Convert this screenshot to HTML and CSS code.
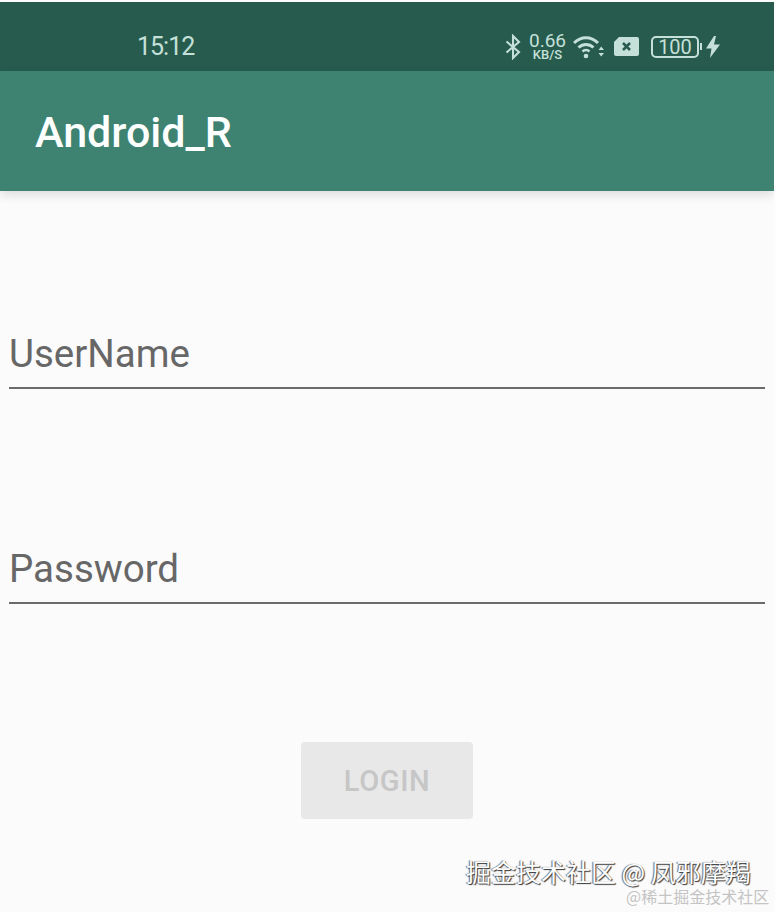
FILE: index.html
```html
<!DOCTYPE html>
<html lang="en">

<head>
    <meta charset="UTF-8">
    <meta name="viewport" content="width=device-width, initial-scale=1.0">
    <title>Android_R</title>
    <link rel="stylesheet" href="styles.css">
</head>

<body>
    <div class="screen">
        <div class="status-bar">
            <span class="clock">15:12</span>
            <div class="status-icons">
                <svg class="icon-bt" width="16" height="26" viewBox="0 0 16 26">
                    <path d="M1.5 7.5 L14 18 L8 24 V2 L14 8 L1.5 18.5" fill="none" stroke="#c5e0d8" stroke-width="2.1"/>
                </svg>
                <div class="speed">
                    <span class="speed-num">0.66</span>
                    <span class="speed-unit">KB/S</span>
                </div>
                <svg class="icon-wifi" width="31" height="26" viewBox="0 0 31 26">
                    <path d="M1 9 C8 2 18 2 25 9" fill="none" stroke="#c5e0d8" stroke-width="3"/>
                    <path d="M5.5 13.5 C10 9.5 16 9.5 20.5 13.5" fill="none" stroke="#c5e0d8" stroke-width="3"/>
                    <path d="M9.5 17.5 C11.5 15.7 14.5 15.7 16.5 17.5" fill="none" stroke="#c5e0d8" stroke-width="2.6"/>
                    <circle cx="13" cy="22" r="2.3" fill="#c5e0d8"/>
                    <path d="M25.5 16 L28.2 12.5 L31 16 Z M25.5 19 L31 19 L28.2 22.5 Z" fill="#c5e0d8"/>
                </svg>
                <svg class="icon-sim" width="27" height="21" viewBox="0 0 27 21">
                    <path d="M6 1 H24 Q26 1 26 3 V18 Q26 20 24 20 H3 Q1 20 1 18 V6 Z" fill="#c5e0d8"/>
                    <path d="M10 7 L17 14 M17 7 L10 14" stroke="#265b4e" stroke-width="2.5"/>
                </svg>
                <div class="battery">
                    <div class="battery-body">100</div>
                    <div class="battery-tip"></div>
                </div>
                <svg class="icon-bolt" width="14" height="22" viewBox="0 0 14 22">
                    <path d="M8 0 L0 12.5 H5.5 L4 22 L14 8.5 H8 L10 0 Z" fill="#c5e0d8"/>
                </svg>
            </div>
        </div>
        <div class="app-bar">Android_R</div>

        <div class="form">
            <div class="field field-user">UserName</div>
            <div class="field field-pass">Password</div>
            <div class="login-row">
                <button class="login-btn">LOGIN</button>
            </div>
        </div>

        <div class="watermark">掘金技术社区 @ 凤邪摩羯</div>
        <div class="watermark-small">@稀土掘金技术社区</div>
    </div>
</body>

</html>
```

FILE: styles.css
```css
html,
body {
    margin: 0;
    background-color: #fdfdfd;
}

.screen {
    position: relative;
    width: 774px;
    height: 912px;
    padding-top: 2px;
    box-sizing: border-box;
    background-color: #fbfbfb;
    overflow: hidden;
    font-family: Roboto, sans-serif;
}

.status-bar {
    height: 69px;
    box-sizing: border-box;
    background-color: #265b4e;
    display: flex;
    align-items: center;
    justify-content: space-between;
    padding: 20px 54px 0 137px;
    color: #c5e0d8;
}

.clock {
    font-size: 25px;
    line-height: 30px;
    letter-spacing: -1px;
}

.status-icons {
    display: flex;
    align-items: center;
}

.speed {
    display: flex;
    flex-direction: column;
    align-items: center;
    margin-left: 8px;
    width: 37px;
}

.speed-num {
    font-size: 19px;
    line-height: 16px;
}

.speed-unit {
    font-size: 13px;
    line-height: 11px;
    font-weight: 500;
}

.icon-wifi {
    margin-left: 7px;
}

.icon-sim {
    margin-left: 9px;
}

.battery {
    display: flex;
    align-items: center;
    margin-left: 11px;
}

.battery-body {
    width: 44px;
    height: 18px;
    border: 2px solid #c5e0d8;
    border-radius: 5px;
    font-size: 20px;
    line-height: 18px;
    text-align: center;
}

.battery-tip {
    width: 2px;
    height: 7px;
    margin-left: 1px;
    background-color: #c5e0d8;
}

.icon-bolt {
    margin-left: 4px;
}

.app-bar {
    height: 120px;
    box-sizing: border-box;
    padding: 3px 0 0 35px;
    background-color: #3e8372;
    box-shadow: 0 4px 10px rgba(0, 0, 0, 0.12);
    color: #fdfffe;
    font-size: 43px;
    font-weight: 500;
    line-height: 117px;
}

.form {
    padding: 0 9px;
}

.field {
    height: 50px;
    border-bottom: 2px solid #6b6b6b;
    color: #676767;
    font-size: 38.5px;
    line-height: 34px;
}

.field-user {
    margin-top: 146px;
}

.field-pass {
    margin-top: 163px;
}

.login-row {
    display: flex;
    justify-content: center;
    margin-top: 138px;
}

.login-btn {
    width: 172px;
    height: 77px;
    padding: 0;
    border: 0;
    border-radius: 4px;
    background-color: #e8e8e8;
    color: #c6c6c6;
    font-family: Roboto, sans-serif;
    font-size: 29px;
    font-weight: 500;
    letter-spacing: 0.6px;
}

.watermark {
    position: absolute;
    left: 466px;
    top: 855px;
    color: #fff;
    font-family: "Noto Sans CJK SC", sans-serif;
    font-size: 25px;
    line-height: 32px;
    white-space: nowrap;
    text-shadow: 1px 1px 1px #333, -1px 0 1px #666;
}

.watermark-small {
    position: absolute;
    left: 626px;
    top: 885px;
    color: #c4c4c4;
    font-family: "Noto Sans CJK SC", sans-serif;
    font-size: 16px;
    line-height: 22px;
    white-space: nowrap;
}
```
